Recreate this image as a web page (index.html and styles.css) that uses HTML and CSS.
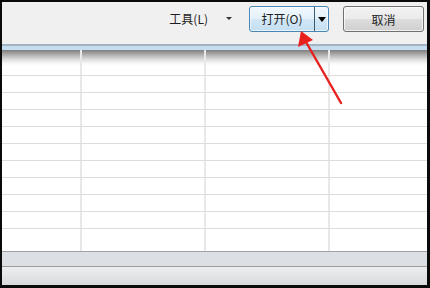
FILE: index.html
```html
<!DOCTYPE html>
<html lang="zh">
<head>
    <meta charset="UTF-8">
    <title>打开</title>
    <link rel="stylesheet" href="styles.css">
</head>
<body>
    <div class="frame">
        <div class="toolbar">
            <span class="tools">工具(L)</span>
            <span class="tools-arrow"></span>
            <div class="split-button">
                <span class="split-main">打开(O)</span>
                <span class="split-drop"><span class="drop-arrow"></span></span>
            </div>
            <button class="cancel">取消</button>
        </div>
        <div class="strip"></div>
        <div class="list">
            <div class="row first"><span></span><span></span><span></span><span></span></div>
            <div class="row"><span></span><span></span><span></span><span></span></div>
            <div class="row"><span></span><span></span><span></span><span></span></div>
            <div class="row"><span></span><span></span><span></span><span></span></div>
            <div class="row"><span></span><span></span><span></span><span></span></div>
            <div class="row"><span></span><span></span><span></span><span></span></div>
            <div class="row"><span></span><span></span><span></span><span></span></div>
            <div class="row"><span></span><span></span><span></span><span></span></div>
            <div class="row"><span></span><span></span><span></span><span></span></div>
            <div class="row"><span></span><span></span><span></span><span></span></div>
            <div class="row filler"><span></span><span></span><span></span><span></span></div>
        </div>
        <div class="status"></div>
        <div class="footer"></div>
    </div>

    <svg class="pointer" width="430" height="288" viewBox="0 0 430 288">
        <line x1="341" y1="103" x2="306" y2="42" stroke="#e8211f" stroke-width="2.4" stroke-linecap="round"/>
        <polygon points="301,31 298,47 313,40" fill="#e8211f"/>
    </svg>
</body>
</html>
```

FILE: styles.css
```css
body {
    margin: 0;
    background-color: #0a0a0a;
    font-family: "Noto Sans CJK SC", "Liberation Sans", sans-serif;
    overflow: hidden;
}

.frame {
    display: flex;
    flex-direction: column;
    height: 283px;
    margin: 2px 3px 3px 2px;
    background-color: #fff;
}

.toolbar {
    height: 42px;
    box-sizing: border-box;
    display: flex;
    justify-content: flex-end;
    align-items: flex-start;
    padding: 4px 3px 0 0;
    background-color: #f0f0f0;
}

.tools {
    font-size: 12px;
    color: #1e1e1e;
    line-height: 26px;
    margin-right: 18px;
}

.tools-arrow {
    margin-top: 11px;
    margin-right: 17px;
    border-left: 3px solid transparent;
    border-right: 3px solid transparent;
    border-top: 3px solid #333;
}

.split-button {
    display: flex;
    width: 80px;
    height: 26px;
    box-sizing: border-box;
    border: 1px solid #4a86b4;
    border-radius: 3px;
    background: linear-gradient(#f1f8fd, #e3f0fa 50%, #d2e7f6 51%, #c4dff2);
    box-shadow: inset 0 0 0 1px rgba(255, 255, 255, 0.6);
    margin-right: 14px;
}

.split-main {
    width: 64px;
    text-align: center;
    font-size: 12px;
    line-height: 24px;
    color: #1e1e1e;
    border-right: 1px solid #3c5a70;
}

.split-drop {
    flex: 1;
    display: flex;
    align-items: center;
    justify-content: center;
}

.drop-arrow {
    border-left: 4px solid transparent;
    border-right: 4px solid transparent;
    border-top: 5px solid #000;
}

.cancel {
    width: 81px;
    height: 26px;
    padding: 0;
    border: 1px solid #707070;
    border-radius: 3px;
    background: linear-gradient(#f2f2f2, #ebebeb 50%, #dddddd 51%, #cfcfcf);
    box-shadow: inset 0 0 0 1px rgba(255, 255, 255, 0.7);
    font-family: "Noto Sans CJK SC", "Liberation Sans", sans-serif;
    font-size: 12px;
    color: #1e1e1e;
}

.strip {
    height: 4px;
    border-top: 2px solid #a3b3c2;
    background-color: #c6ddef;
}

.list {
    flex: 1;
    display: flex;
    flex-direction: column;
    background-color: #fff;
}

.row {
    display: grid;
    grid-template-columns: 80px 124px 124px 1fr;
    height: 16px;
    border-bottom: 1px solid #dcdcdc;
}

.row span {
    border-right: 2px solid #e8e8e8;
}

.row span:last-child {
    border-right: none;
}

.row.first {
    height: 25px;
    background: linear-gradient(#7e7e7e, #a8a8a8 4px, #d8d8d8 9px, #f6f6f6 13px, #fff 16px);
}

.row.filler {
    flex: 1;
    border-bottom: none;
}

.status {
    height: 14px;
    border-top: 1px solid #9ea1a5;
    border-bottom: 1px solid #9c9c9c;
    background-color: #dcdfe3;
}

.footer {
    height: 18px;
    background: linear-gradient(#eceef0, #d8dadd);
}

.pointer {
    position: absolute;
    left: 0;
    top: 0;
}
```
